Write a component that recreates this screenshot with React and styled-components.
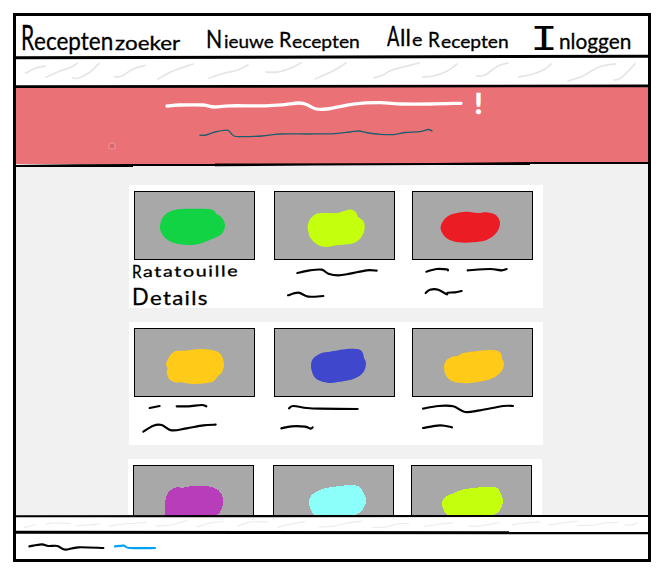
import React from 'react';
import styled, { createGlobalStyle } from 'styled-components';

const GlobalStyle = createGlobalStyle`
  * { box-sizing: border-box; }
  body { margin: 0; background: #fff; color: #000; font-family: Lato, sans-serif; }
`;

const Frame = styled.div`
  width: 638px;
  height: 549px;
  margin: 13px 0 0 13px;
  border: 3px solid #000;
  display: flex;
  flex-direction: column;
  overflow: hidden;
`;

const Nav = styled.nav`
  height: 41px;
  flex: none;
  display: flex;
  padding-left: 5px;
`;

const NavLink = styled.a`
  width: ${(p) => p.$width}px;
  height: 41px;
  line-height: 56px;
  flex: none;
  white-space: nowrap;
  color: #000;
`;

const Ink = styled.span`
  display: inline-block;
  width: ${(p) => p.$w}px;
  font-size: ${(p) => p.$size}px;
  font-family: ${(p) => p.$face || 'Lato'}, sans-serif;
  letter-spacing: ${(p) => p.$track || 0}px;
  line-height: 1;
  vertical-align: ${(p) => p.$lift || 0}px;
  transform: scaleX(${(p) => p.$stretch || 1}) rotate(${(p) => p.$tilt || 0}deg);
  transform-origin: 0 80%;
  -webkit-text-stroke: ${(p) => p.$edge ?? 0.3}px #000;
`;

const RuleSvg = styled.svg`
  display: block;
  flex: none;
  width: 632px;
  height: 10px;
  margin: -5px 0;
  position: relative;
  z-index: 1;
`;

const Strip = styled.div`
  height: ${(p) => p.$height}px;
  flex: none;
  background: #fff;
`;

const Hero = styled.header`
  height: 78px;
  flex: none;
  background: #ea7176;
`;

const Main = styled.main`
  height: 352px;
  flex: none;
  overflow: hidden;
  background: #f1f1f1;
  padding: 21px 0 0 113px;
  display: flex;
  flex-direction: column;
  gap: 14px;
`;

const Shelf = styled.section`
  width: 414px;
  height: 123px;
  flex: none;
  background: #fff;
  padding: 6px 5px 0;
  margin-left: ${(p) => p.$nudge || 0}px;
  display: grid;
  grid-template-columns: 121px 121px 121px;
  column-gap: 18px;
`;

const Card = styled.article`
  width: 121px;
  margin-left: ${(p) => p.$shift || 0}px;
`;

const Photo = styled.div`
  width: 121px;
  height: 69px;
  background: #a8a8a8;
  border: 1px solid #000;
`;

const Blob = styled.svg`
  display: block;
  width: 121px;
  height: 69px;
  margin: -1px;
`;

const Drawing = styled.svg`
  display: block;
  width: ${(p) => p.$w}px;
  height: ${(p) => p.$h}px;
  overflow: visible;
`;

const Caption = styled.div`
  height: 48px;
  margin-left: -2px;
  white-space: nowrap;
`;

const CaptionLine = styled.div`
  height: 24px;
  line-height: ${(p) => p.$line}px;
`;

const Footer = styled.footer`
  height: 27px;
  flex: none;
  background: #fff;
`;

/* Smooth curve through a list of points. */
function curve(flat, closed = false) {
  const pts = [];
  for (let i = 0; i < flat.length; i += 2) pts.push([flat[i], flat[i + 1]]);
  const n = pts.length;
  const at = (i) => (closed ? pts[(i + n) % n] : pts[Math.max(0, Math.min(n - 1, i))]);
  let d = `M${pts[0][0]} ${pts[0][1]}`;
  for (let i = 0; i < (closed ? n : n - 1); i++) {
    const [a, b, c, e] = [at(i - 1), at(i), at(i + 1), at(i + 2)];
    d += `C${b[0] + (c[0] - a[0]) / 6} ${b[1] + (c[1] - a[1]) / 6} ${c[0] - (e[0] - b[0]) / 6} ${c[1] - (e[1] - b[1]) / 6} ${c[0]} ${c[1]}`;
  }
  return closed ? d + 'Z' : d;
}

function Strokes({ lines, color = '#000', width = 6.4 }) {
  return (
    <g fill="none" stroke={color} strokeWidth={width} strokeLinecap="round" strokeLinejoin="round">
      {lines.map((l, i) => <path key={i} d={curve(l)} />)}
    </g>
  );
}

function Rule({ from, to, width }) {
  return (
    <RuleSvg viewBox="0 -5 632 10">
      <path d={`M-2 ${from}L634 ${to}`} stroke="#000" strokeWidth={width} />
    </RuleSvg>
  );
}

const topHatch = [
  [26, 73, 36, 68, 45, 66], [46.5, 77, 60, 71, 69, 68, 77, 63.5], [73, 78, 79, 78, 90, 72, 99, 63.5],
  [115, 77, 122, 76, 133, 69, 145, 65.5], [158, 79, 173, 71, 193, 64], [209, 78, 225, 73, 238, 70, 248, 65],
  [266, 72, 278, 72, 291, 68, 301, 63], [315, 79, 333, 71, 346, 63], [374, 78, 383, 75, 392, 70, 419, 63],
  [423, 77, 434, 76, 447, 71, 457, 64], [477, 76, 485, 75, 498, 66, 508, 63], [519, 77, 533, 74, 545, 69, 551, 64],
  [568, 81, 583, 76, 599, 67, 615, 64], [614, 80, 621, 78, 635, 64],
];
const bottomHatch = [
  [24, 528, 30, 526, 35, 524.5], [46, 524, 54, 523, 70, 523.5], [76, 526, 88, 525, 100, 524],
  [109, 526, 125, 524, 146, 522.5], [156, 526, 170, 525, 187, 520.5], [197, 527, 210, 523, 223, 521.5],
  [238, 526, 250, 522, 268, 522], [278, 527.5, 291, 524, 305, 521.7], [319, 527, 334, 526, 347, 523, 362, 521],
  [373, 527.5, 386, 527, 397, 524, 409, 523.5], [424, 526.5, 440, 524, 453, 523], [469, 526, 480, 526, 499, 522.5],
  [512, 525, 525, 523, 540, 522], [548, 525, 563, 523, 578, 521], [578, 525.5, 594, 525, 605, 523, 618, 522.5],
  [625, 525, 632, 525, 637, 523],
];
const heroTitle = [167, 106, 180, 105, 203, 105, 214, 107, 230, 105.8, 265, 105.8, 283, 104.8, 298, 103, 306, 104.3, 316, 109, 327, 109, 355, 103.8, 380, 102.6, 402, 104, 430, 104, 461, 103.3];
const heroLine = [200, 135.2, 206, 135, 215, 132, 226, 130.2, 229, 131, 234, 136, 242, 136.6, 262, 136, 280, 134, 310, 134, 335, 133.6, 350, 132, 359, 131, 366, 132.5, 380, 134.3, 393, 134.6, 405, 132.5, 420, 131.6, 428, 129.5, 432, 131];

const recipes = [
  [
    { color: '#12d344', title: 'Ratatouille', blob: [78, 107, 85, 82, 103, 64, 133, 55, 178, 53, 226, 54, 241, 61, 247, 68, 263, 79, 273, 102, 266, 125, 248, 138, 220, 150, 193, 159, 163, 162, 123, 157, 98, 145, 83, 127] },
    { color: '#c4ff0e', shift: 1, blob: [101, 107, 108, 85, 128, 68, 163, 66, 188, 66, 213, 59, 233, 56, 246, 64, 252, 77, 268, 90, 272, 112, 263, 137, 238, 157, 188, 163, 158, 168, 132, 162, 110, 142, 103, 122],
      lines: [[70, 39, 108, 31, 143, 29, 163, 41, 193, 46, 228, 41, 278, 31, 308, 32], [42, 106, 73, 98, 103, 110, 148, 108]] },
    { color: '#ec1c24', blob: [86, 114, 94, 89, 119, 70, 164, 62, 197, 66, 224, 64, 254, 74, 264, 99, 252, 127, 224, 147, 184, 154, 139, 154, 104, 142],
      lines: [[43, 35, 74, 27, 104, 28, 108, 31], [167, 31, 234, 27, 269, 31, 284, 27], [41, 99, 54, 89, 79, 89, 104, 103, 107, 98, 129, 97, 149, 93]] },
  ],
  [
    { color: '#ffca18', blob: [96, 109, 106, 86, 123, 70, 153, 68, 198, 63, 243, 68, 263, 83, 270, 111, 263, 134, 253, 143, 233, 162, 178, 168, 143, 163, 123, 163, 105, 152, 98, 133, 101, 121],
      lines: [[47, 33, 77, 27], [128, 28, 163, 28, 203, 24, 217, 28], [28, 104, 58, 86, 83, 84, 113, 100, 158, 94, 208, 85, 245, 83]] },
    { color: '#3f48cc', shift: 1, blob: [111, 116, 118, 91, 143, 75, 168, 71, 218, 63, 253, 64, 266, 74, 270, 89, 276, 106, 268, 133, 238, 153, 178, 164, 153, 163, 123, 149],
      lines: [[45, 34, 58, 27, 98, 33, 138, 35, 251, 36], [22, 94, 53, 88, 93, 89, 110, 95, 116, 91]] },
    { color: '#ffca18', blob: [96, 119, 102, 98, 119, 87, 139, 83, 154, 75, 204, 68, 249, 67, 266, 76, 270, 91, 276, 109, 266, 133, 234, 154, 174, 165, 129, 162, 104, 146],
      lines: [[33, 35, 79, 27, 124, 28, 159, 45, 204, 40, 274, 27, 303, 27], [33, 93, 84, 85, 120, 91]] },
  ],
  [
    { color: '#b83dba', crisp: true, blob: [96, 110, 106, 83, 126, 68, 151, 68, 171, 64, 221, 63, 256, 75, 271, 103, 266, 130, 249, 150, 178, 166, 103, 152, 96, 133] },
    { color: '#8cfffb', crisp: true, shift: 1, blob: [108, 115, 116, 90, 141, 75, 171, 67, 231, 60, 256, 64, 273, 85, 279, 110, 269, 133, 243, 151, 171, 165, 124, 150] },
    { color: '#c4ff0e', crisp: true, blob: [93, 118, 102, 97, 127, 85, 157, 73, 207, 67, 252, 66, 267, 80, 276, 107, 267, 135, 243, 151, 170, 165, 111, 151] },
  ],
];

function RecipeCard({ color, blob, lines, title, shift, crisp }) {
  return (
    <Card $shift={shift}>
      <Photo>
        <Blob viewBox="0 0 363 207">
          <path d={curve(blob, true)} fill={color} shapeRendering={crisp ? 'crispEdges' : 'auto'} />
        </Blob>
      </Photo>
      {title && (
        <Caption>
          <CaptionLine $line={24}>
            <Ink $size={17} $w={11} $stretch={0.9}>{title[0]}</Ink>
            <Ink $size={15} $w={96} $stretch={1.32} $track={1.2} $lift={1} $tilt={-0.6}>{title.slice(1)}</Ink>
          </CaptionLine>
          <CaptionLine $line={29}>
            <Ink $size={23} $w={18} $stretch={0.95}>D</Ink>
            <Ink $size={19} $w={60} $stretch={1.17} $track={1.1}>etails</Ink>
          </CaptionLine>
        </Caption>
      )}
      {lines && (
        <Drawing $w={121} $h={48} viewBox="0 0 363 144">
          <Strokes lines={lines} />
        </Drawing>
      )}
    </Card>
  );
}

export default function App() {
  return (
    <>
      <GlobalStyle />
      <Frame>
        <Nav>
          <NavLink $width={185}>
            <Ink $size={34} $w={13} $stretch={0.62}>R</Ink>
            <Ink $size={25} $w={81} $stretch={0.9}>ecepten</Ink>
            <Ink $size={19} $w={66} $stretch={1.18}>zoeker</Ink>
          </NavLink>
          <NavLink $width={181}>
            <Ink $size={25} $w={18} $stretch={0.85} $lift={2}>N</Ink>
            <Ink $size={18} $w={51} $stretch={1.05} $lift={2}>ieuwe</Ink>{' '}
            <Ink $size={22} $w={13} $stretch={0.9} $lift={3}>R</Ink>
            <Ink $size={18} $w={68} $stretch={1.07} $lift={2}>ecepten</Ink>
          </NavLink>
          <NavLink $width={143}>
            <Ink $size={26} $w={13} $stretch={0.7} $lift={4}>A</Ink>
            <Ink $size={23} $w={12} $stretch={1} $lift={4}>ll</Ink>
            <Ink $size={18} $w={12} $stretch={1.1} $lift={4}>e</Ink>{' '}
            <Ink $size={21} $w={13} $stretch={0.9} $lift={3}>R</Ink>
            <Ink $size={17} $w={68} $stretch={1.13} $lift={2}>ecepten</Ink>
          </NavLink>
          <NavLink $width={107}>
            <Ink $size={36} $w={29} $stretch={1.3} $edge={0} $face="'Liberation Mono'">I</Ink>
            <Ink $size={21} $w={73} $stretch={0.99} $lift={1}>nloggen</Ink>
          </NavLink>
        </Nav>
        <Rule from={0.8} to={-0.8} width={3} />
        <Strip $height={29}>
          <Drawing $w={632} $h={29} viewBox="16 57 632 29">
            <Strokes lines={topHatch} color="#e5e5e5" width={1.8} />
          </Drawing>
        </Strip>
        <Rule from={0.6} to={-0.2} width={2.7} />
        <Hero>
          <Drawing $w={632} $h={78} viewBox="16 86 632 78">
            <Strokes lines={[heroTitle]} color="#fff" width={3.3} />
            <Strokes lines={[heroLine]} color="#1b5f6d" width={1.3} />
            <text x="474.5" y="113.5" fill="#fff" stroke="#fff" strokeWidth="0.5" fontFamily="Lato" fontWeight="900" fontSize="28">!</text>
            <circle cx="112" cy="146" r="3.2" fill="#d8646c" stroke="#ee9ba0" strokeWidth="1" />
          </Drawing>
        </Hero>
        <RuleSvg viewBox="0 -5 632 10">
          <path d="M0 1L60 .3L117 0L199 0V-.5L418 -1L514 -2H632V0H514V1L418 1L299 1.4L199 2.3V2L117 2V3H0Z" fill="#000" />
        </RuleSvg>
        <Main>
          {recipes.map((row, r) => (
            <Shelf key={r} $nudge={r === 2 ? -1 : 0}>
              {row.map((recipe, c) => <RecipeCard key={c} {...recipe} />)}
            </Shelf>
          ))}
        </Main>
        <Rule from={0.2} to={0} width={2.1} />
        <Strip $height={16}>
          <Drawing $w={632} $h={16} viewBox="16 516 632 16">
            <Strokes lines={bottomHatch} color="#ebebeb" width={1.1} />
          </Drawing>
        </Strip>
        <Rule from={0.3} to={0.8} width={2.9} />
        <Footer>
          <Drawing $w={632} $h={27} viewBox="48 96 1896 81">
            <Strokes lines={[[88, 139, 125, 133, 145, 138, 172, 138, 195, 149, 235, 142, 310, 144]]} />
            <Strokes lines={[[345, 139, 372, 137, 388, 144, 465, 144]]} color="#00a2f3" />
          </Drawing>
        </Footer>
      </Frame>
    </>
  );
}
